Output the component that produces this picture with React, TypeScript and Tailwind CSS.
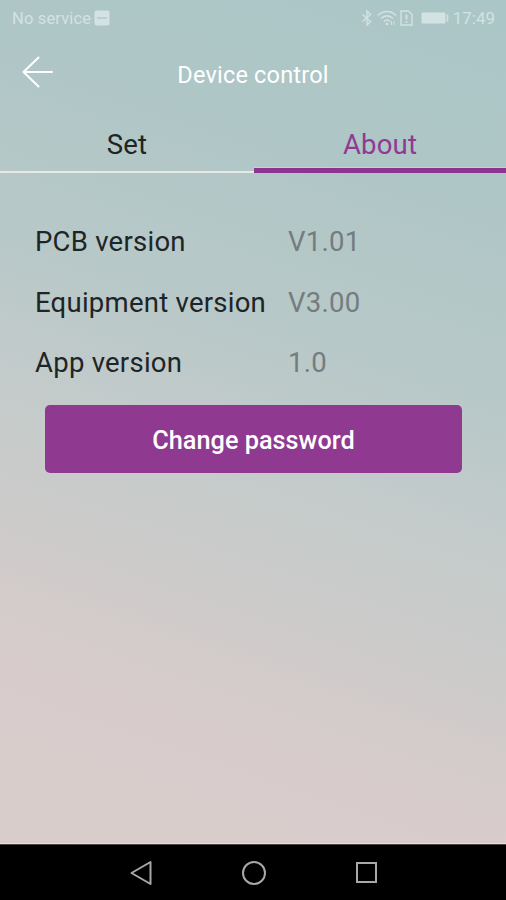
import React from "react";

const versions = [
  { label: "PCB version", value: "V1.01" },
  { label: "Equipment version", value: "V3.00" },
  { label: "App version", value: "1.0" },
];

function StatusBar() {
  return (
    <div className="flex h-9 items-center justify-between pl-3 pr-[11px] text-[#d3e2e2]">
      <div className="flex items-center gap-[3px]">
        <span className="pt-px text-[16.5px] leading-9 tracking-[0.15px]">No service</span>
        <svg width="16" height="16" viewBox="0 0 16 16">
          <rect x="0.5" y="0.5" width="15" height="15" rx="2" fill="currentColor" />
          <path d="M3 8h10" stroke="#b8cccb" strokeWidth="1.6" />
        </svg>
      </div>
      <div className="flex items-center">
        {/* Bluetooth */}
        <svg width="12" height="18" viewBox="0 0 12 18" fill="none" stroke="currentColor" strokeWidth="1.4">
          <path d="M1.5 5.5l8 7L6 16V2l3.5 3.5-8 7" />
        </svg>
        {/* Wi-Fi */}
        <svg className="ml-1" width="20" height="18" viewBox="0 0 20 18" fill="none" stroke="currentColor" strokeWidth="1.6">
          <path d="M1 6.5C6 1.2 14 1.2 19 6.5M4 9.5c3.4-3.5 8.6-3.5 12 0M7 12.5c1.8-1.8 4.2-1.8 6 0" />
          <circle cx="10" cy="15" r="1.3" fill="currentColor" stroke="none" />
          <path d="M14.5 12v4M17 12v4" strokeWidth="1" />
        </svg>
        {/* SIM alert */}
        <svg className="ml-[3px]" width="13" height="18" viewBox="0 0 13 18" fill="none" stroke="currentColor" strokeWidth="1.4">
          <path d="M1 2h7.5L12 5.500V16H1z" />
          <path d="M6.5 5.5v5M6.5 12v1.8" strokeWidth="1.8" />
        </svg>
        {/* Battery */}
        <svg className="ml-2" width="28" height="12" viewBox="0 0 28 12">
          <rect x="0.5" y="0.5" width="24" height="11" rx="1" fill="currentColor" />
          <path d="M26.5 2.5v7" stroke="currentColor" strokeWidth="1.5" />
        </svg>
        <span className="ml-1 text-[17px] leading-9">17:49</span>
      </div>
    </div>
  );
}

function Header() {
  return (
    <header className="grid h-20 grid-cols-[80px_1fr_80px] items-start">
      <button className="pl-[22px] pt-5 text-white" aria-label="Back">
        <svg width="32" height="32" viewBox="0 0 32 32" fill="none" stroke="currentColor" strokeWidth="2" strokeLinecap="round" strokeLinejoin="round">
          <path d="M30 16H1.5M16.5 1.5L1.5 16l15 14.5" />
        </svg>
      </button>
      <h1 className="pt-[23px] text-center text-[23.5px] leading-8 tracking-[0.2px] text-white">Device control</h1>
    </header>
  );
}

function Tabs() {
  return (
    <div className="flex h-[57px] text-center text-[27.5px] leading-[58px] tracking-[0.2px]">
      <button className="flex w-[254px] flex-col">
        <span className="h-[55px] w-full text-[#1d2526]">Set</span>
        <span className="h-[2px] w-full bg-[#e7e9e6]" />
      </button>
      <button className="flex flex-1 flex-col">
        <span className="h-[51px] w-full text-[#8f3a93]">About</span>
        <span className="h-px w-full bg-[#bfd5d6]" />
        <span className="h-[5px] w-full bg-[#8d3490]" />
      </button>
    </div>
  );
}

function NavBar() {
  return (
    <nav className="flex h-14 items-center justify-center gap-[88px] border-t border-[#4a4441] bg-black pl-px text-[#a8a8a8]">
      <svg width="24" height="26" viewBox="0 0 24 26" fill="none" stroke="currentColor" strokeWidth="2" strokeLinejoin="round">
        <path d="M21.5 2v22L2.500 13z" />
      </svg>
      <svg width="26" height="26" viewBox="0 0 26 26" fill="none" stroke="currentColor" strokeWidth="2">
        <circle cx="13" cy="13" r="11" />
      </svg>
      <svg width="24" height="24" viewBox="0 0 24 24" fill="none" stroke="currentColor" strokeWidth="2">
        <rect x="2" y="2" width="19" height="19" />
      </svg>
    </nav>
  );
}

export default function App() {
  return (
    <div className="flex h-[900px] w-[506px] flex-col overflow-hidden bg-black font-[Roboto,sans-serif]">
      <main className="flex-1 border-b border-[#e8dfdd] bg-[linear-gradient(199deg,#abc6c8_0%,#afc6c6_20%,#b8c8c8_40%,#c5cbcb_56%,#cccbca_67%,#d7cccb_81%,#d9cdcc_100%)]">
        <StatusBar />
        <Header />
        <Tabs />

        <dl className="mt-[38px] flex flex-col text-[27.5px] tracking-[0.25px]">
          {versions.map((item) => (
            <div key={item.label} className="flex h-[60.5px] pl-[35px] leading-[61px]">
              <dt className="w-[253px] text-[#1d2526]">{item.label}</dt>
              <dd className="text-[#747c7d]">{item.value}</dd>
            </div>
          ))}
        </dl>

        <button className="ml-[45px] mt-3 h-[68px] w-[417px] rounded-[5px] bg-[#8f3990] pt-[4px] text-[25.3px] font-medium text-white">
          Change password
        </button>
      </main>
      <NavBar />
    </div>
  );
}
